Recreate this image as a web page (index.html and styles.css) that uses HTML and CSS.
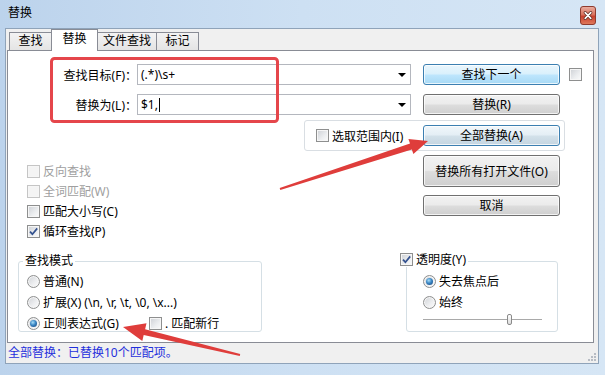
FILE: index.html
```html
<!DOCTYPE html>
<html lang="zh-CN">
<head>
<meta charset="utf-8">
<title>替换</title>
<link rel="stylesheet" href="styles.css">
</head>
<body>
<div class="window">
  <div class="titlebar">
    <span class="title">替换</span>
    <span class="close">
      <svg width="16" height="19" viewBox="0 0 16 19">
        <defs>
          <linearGradient id="cg" x1="0" y1="0" x2="0" y2="1">
            <stop offset="0" stop-color="#eab0a3"/>
            <stop offset="0.45" stop-color="#d9735f"/>
            <stop offset="0.55" stop-color="#c8412f"/>
            <stop offset="1" stop-color="#e07c5e"/>
          </linearGradient>
        </defs>
        <rect x="0.5" y="0.5" width="15" height="18" rx="2.5" fill="url(#cg)" stroke="#8e3b2f"/>
        <path d="M5.2 6.6 L10.8 12.4 M10.8 6.6 L5.2 12.4" stroke="#5b2a22" stroke-width="3" stroke-linecap="round"/>
        <path d="M5.2 6.6 L10.8 12.4 M10.8 6.6 L5.2 12.4" stroke="#ffffff" stroke-width="1.6" stroke-linecap="round"/>
      </svg>
    </span>
  </div>
  <div class="client">
    <div class="tabs">
      <div class="tab">查找</div>
      <div class="tab active">替换</div>
      <div class="tab">文件查找</div>
      <div class="tab">标记</div>
    </div>
    <div class="panel">
      <div class="row row-find">
        <span class="flabel">查找目标(F)：</span>
        <div class="combo"><span class="ctext">(.*)\s+</span><span class="arrow"></span></div>
        <button class="btn btn-default">查找下一个</button>
        <span class="cb cb-side"></span>
      </div>
      <div class="row row-repl">
        <span class="flabel">替换为(L)：</span>
        <div class="combo"><span class="ctext">$1,</span><span class="caret"></span><span class="arrow"></span></div>
        <button class="btn">替换(R)</button>
      </div>
      <div class="sel-group">
        <span class="chk"><span class="cb"></span>选取范围内(I)</span>
        <button class="btn btn-hot">全部替换(A)</button>
      </div>
      <div class="lower">
        <div class="lcol">
          <div class="opts">
            <div class="chk disabled"><span class="cb"></span>反向查找</div>
            <div class="chk disabled"><span class="cb"></span>全词匹配(W)</div>
            <div class="chk"><span class="cb"></span>匹配大小写(C)</div>
            <div class="chk"><span class="cb checked"><svg width="11" height="11" viewBox="0 0 11 11"><path d="M2 5.6 L4.4 8.2 L9.2 2.4" fill="none" stroke="#34528f" stroke-width="1.7"/></svg></span>循环查找(P)</div>
          </div>
          <div class="grp grp-mode">
            <div class="grp-head">查找模式</div>
            <div class="grp-box">
              <div class="rad"><span class="rb"></span>普通(N)</div>
              <div class="rad"><span class="rb"></span>扩展(X) (\n, \r, \t, \0, \x...)</div>
              <div class="rad"><span class="rb on"></span>正则表达式(G)<span class="chk newline"><span class="cb"></span>. 匹配新行</span></div>
            </div>
          </div>
        </div>
        <div class="rcol">
          <button class="btn btn-tall">替换所有打开文件(O)</button>
          <button class="btn btn-cancel">取消</button>
          <div class="grp grp-trans">
            <div class="grp-head"><span class="cb checked"><svg width="11" height="11" viewBox="0 0 11 11"><path d="M2 5.6 L4.4 8.2 L9.2 2.4" fill="none" stroke="#34528f" stroke-width="1.7"/></svg></span>透明度(Y)</div>
            <div class="grp-box">
              <div class="rad"><span class="rb on"></span>失去焦点后</div>
              <div class="rad"><span class="rb"></span>始终</div>
              <div class="slider"><span class="thumb"></span></div>
            </div>
          </div>
        </div>
      </div>
    </div>
    <div class="status">
      <span>全部替换：已替换10个匹配项。</span>
      <svg class="grip" width="11" height="11" viewBox="0 0 11 11">
        <g fill="#b7bcc4">
          <rect x="8" y="2" width="2" height="2"/>
          <rect x="5" y="5" width="2" height="2"/><rect x="8" y="5" width="2" height="2"/>
          <rect x="2" y="8" width="2" height="2"/><rect x="5" y="8" width="2" height="2"/><rect x="8" y="8" width="2" height="2"/>
        </g>
      </svg>
    </div>
  </div>
  <svg class="annot" width="605" height="375" viewBox="0 0 605 375">
    <rect x="51.5" y="58.5" width="226" height="63" rx="3" fill="none" stroke="#e5464b" stroke-width="3"/>
    <polygon points="279.7,188 410,143.6 408.4,138.9 428,141 413.4,154.1 411.8,149.4 280.3,190" fill="#df3d3b"/>
    <polygon points="240.2,354 145.1,329.2 146.5,323.3 123,327 142.3,340.9 143.7,335 239.8,356" fill="#df3d3b"/>
  </svg>
</div>
</body>
</html>
```

FILE: styles.css
```css
* { box-sizing: border-box; }
html, body { margin: 0; padding: 0; }
body {
  width: 605px;
  height: 375px;
  overflow: hidden;
  font-family: "Noto Sans", "Noto Sans CJK SC", sans-serif;
  font-size: 12px;
  color: #000;
}
.window {
  position: relative;
  width: 605px;
  height: 375px;
  padding: 0 6px 11px 5px;
  display: flex;
  flex-direction: column;
  background: linear-gradient(90deg, #bcd3ec 0%, #cde0f3 50%, #d6e6f5 100%);
}
.titlebar {
  height: 28px;
  margin: 0 -6px 0 -5px;
  padding: 0 9px 0 8px;
  display: flex;
  align-items: flex-start;
  justify-content: space-between;
}
.title { margin-top: 5px; line-height: 16px; }
.close { margin-top: 6px; width: 16px; height: 19px; display: block; }
.close svg { display: block; }
.client {
  flex: 1;
  border: 1px solid #8fa3b9;
  background: #f0f0f0;
  display: flex;
  flex-direction: column;
}
.tabs {
  height: 21px;
  display: flex;
  align-items: flex-end;
  padding-left: 3px;
}
.tab {
  height: 18px;
  min-width: 43px;
  padding: 0 5px;
  margin-right: -1px;
  border: 1px solid #898c95;
  border-bottom: none;
  background: linear-gradient(#f3f3f3, #e4e4e4);
  text-align: center;
  line-height: 16px;
  white-space: nowrap;
}
.tab.active {
  height: 22px;
  min-width: 47px;
  margin-bottom: -1px;
  background: #fff;
  position: relative;
  z-index: 1;
  line-height: 18px;
}
.panel {
  height: 293px;
  margin: 0 4px 0 1px;
  border: 1px solid #898c95;
  background: #fff;
  display: flex;
  flex-direction: column;
}
.row { display: flex; align-items: center; height: 21px; }
.row-find { margin-top: 13px; }
.row-repl { margin-top: 9px; }
.flabel { width: 129px; text-align: right; white-space: nowrap; }
.combo {
  width: 274px;
  height: 21px;
  border: 1px solid #b4b7be;
  background: #fff;
  display: flex;
  align-items: center;
  padding-left: 3px;
  font-size: 12px;
}
.caret { display: block; width: 1px; height: 14px; background: #000; margin-left: 1px; }
.arrow {
  margin-left: auto;
  margin-right: 4px;
  width: 0;
  height: 0;
  border-top: 4px solid #000;
  border-left: 4px solid transparent;
  border-right: 4px solid transparent;
}
.btn {
  width: 137px;
  height: 21px;
  margin-left: 12px;
  padding: 0;
  border: 1px solid #707070;
  border-radius: 3px;
  background: linear-gradient(#f2f2f2 0%, #ebebeb 48%, #dddddd 52%, #cfcfcf 100%);
  box-shadow: inset 0 0 0 1px rgba(255,255,255,0.75);
  font: inherit;
  font-size: 12px;
  color: #000;
  line-height: 17px;
}
.btn-default {
  border-color: #3c7fb1;
  background: linear-gradient(#eaf6fd 0%, #d9f0fc 48%, #bee6fd 52%, #a7d9f5 100%);
}
.btn-hot {
  margin-left: 0;
  border-color: #3c7fb1;
  background: linear-gradient(#f1f7fb 0%, #e4eef5 48%, #d3e1ea 52%, #c4d5e1 100%);
}
.cb {
  width: 13px;
  height: 13px;
  flex: none;
  border: 1px solid #8e8f8f;
  background: linear-gradient(135deg, #cdd0d5 0%, #eceef0 60%, #fbfbfb 100%);
  box-shadow: inset 0 0 0 1px #f6f6f6;
  display: flex;
  align-items: center;
  justify-content: center;
}
.cb svg { display: block; }
.cb-side { margin-left: 9px; }
.chk { display: flex; align-items: center; gap: 3px; white-space: nowrap; }
.disabled { color: #a0a0a0; }
.disabled .cb { border-color: #c5c5c5; background: #f4f4f4; }
.sel-group {
  margin: 5px 0 0 296px;
  width: 261px;
  height: 31px;
  border: 1px solid #d9dee3;
  border-radius: 3px;
  display: flex;
  align-items: center;
  justify-content: space-between;
  padding: 0 4px 0 11px;
}
.lower { display: flex; flex: 1; }
.lcol { width: 392px; padding-left: 10px; }
.opts { margin: 10px 0 0 9px; }
.opts .chk { height: 20px; }
.grp { margin-top: 11px; }
.grp-head {
  display: inline-flex;
  align-items: center;
  gap: 3px;
  height: 14px;
  line-height: 14px;
  background: #fff;
  position: relative;
  z-index: 1;
  padding: 0 2px;
  margin-left: 5px;
}
.grp-box {
  margin-top: -8px;
  height: 71px;
  border: 1px solid #d5dfe5;
  border-radius: 3px;
  padding: 11px 0 0 8px;
  display: flex;
  flex-direction: column;
  gap: 5px;
}
.grp-mode { width: 244px; }
.rad { display: flex; align-items: center; gap: 3px; height: 16px; white-space: nowrap; }
.rb {
  width: 13px;
  height: 13px;
  flex: none;
  border-radius: 50%;
  border: 1px solid #8e8f8f;
  background: linear-gradient(135deg, #cfd2d6 0%, #eeeff1 60%, #fcfcfc 100%);
  box-shadow: inset 0 0 0 1px #f6f6f6;
  display: flex;
  align-items: center;
  justify-content: center;
}
.rb.on::after {
  content: "";
  width: 7px;
  height: 7px;
  border-radius: 50%;
  background: radial-gradient(circle at 40% 35%, #a9def8 0%, #3a86c4 45%, #173f73 100%);
}
.newline { margin-left: 27px; }
.rcol { width: 193px; display: flex; flex-direction: column; align-items: flex-start; }
.rcol .btn { margin-left: 23px; }
.btn-tall { height: 32px; margin-top: 4px; }
.btn-cancel { margin-top: 8px; }
.grp-trans { margin-top: 36px; width: 158px; }
.grp-trans .grp-head { margin-left: 0; padding: 0 2px 0 0; }
.grp-trans .grp-box { margin-left: 6px; width: 152px; padding-left: 16px; }
.slider {
  width: 119px;
  height: 9px;
  display: flex;
  align-items: center;
  background:
    linear-gradient(#a9a9a9, #a9a9a9) 0 4px / 100% 1px no-repeat,
    linear-gradient(#ffffff, #ffffff) 0 5px / 100% 1px no-repeat;
}
.thumb {
  margin-left: 84px;
  width: 5px;
  height: 11px;
  border: 1px solid #8a8a8a;
  border-radius: 2px;
  background: linear-gradient(#ffffff, #dcdcdc);
}
.status {
  height: 20px;
  line-height: 20px;
  padding-left: 2px;
  color: #1f2fdc;
  display: flex;
  justify-content: space-between;
  align-items: flex-end;
}
.status span { align-self: center; }
.grip { display: block; margin: 0 1px 1px 0; }
.annot { position: absolute; left: 0; top: 0; pointer-events: none; }
```
